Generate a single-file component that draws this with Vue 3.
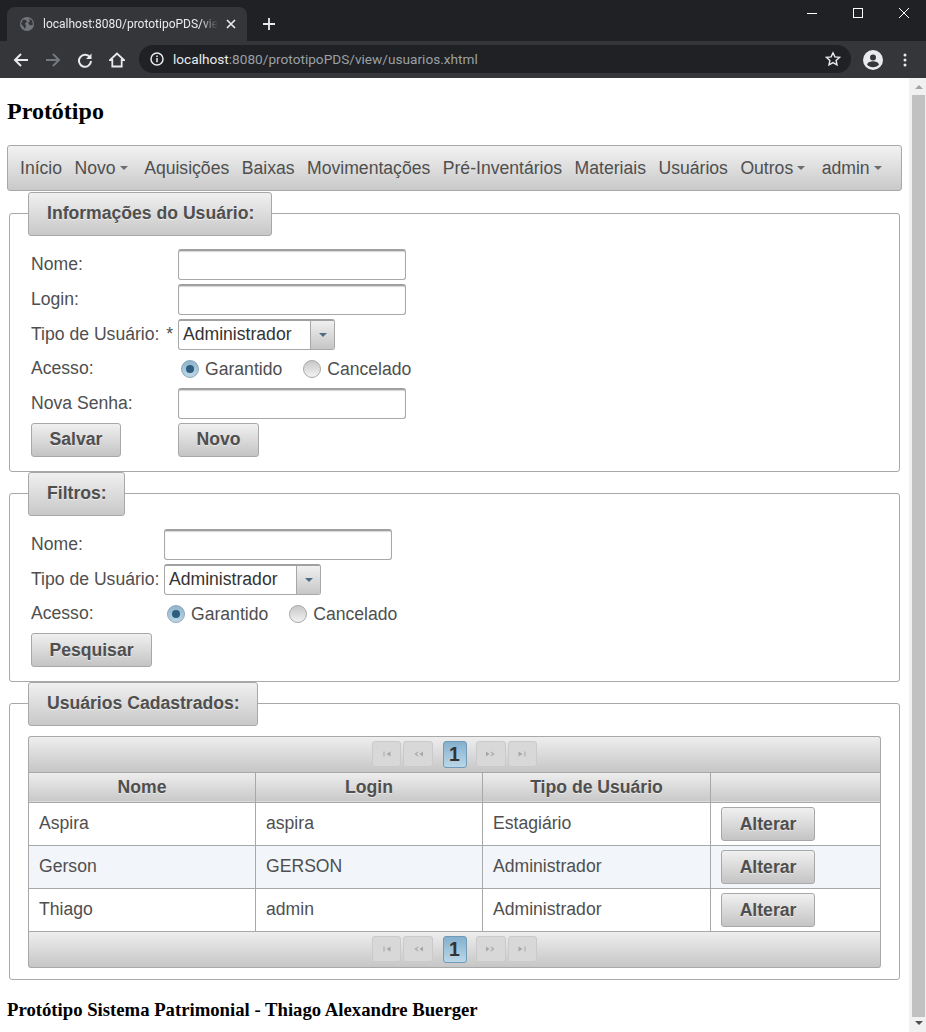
<template>
  <div class="window">
    <!-- barra de abas -->
    <div class="tabstrip">
      <div class="tab">
        <svg class="globe" width="14" height="14" viewBox="0 0 14 14">
          <circle cx="7" cy="7" r="7" fill="#73767b" />
          <path d="M3 2.500l3 .5 1 2-2 1.500 1 2.500-1 3-2-3-2-2zM9 1.500l3 2 1 4-2 1-2-1-1-2 2-1z" fill="#35363a" />
        </svg>
        <span class="tab-title">localhost:8080/prototipoPDS/view/usuarios.xhtml</span>
        <svg class="tab-close" width="10" height="10" viewBox="0 0 10 10">
          <path d="M1 1l8 8M9 1l-8 8" stroke="#e8eaed" stroke-width="1.700" fill="none" />
        </svg>
      </div>
      <svg class="new-tab" width="14" height="14" viewBox="0 0 14 14">
        <path d="M7 1v12M1 7h12" stroke="#e8eaed" stroke-width="1.800" fill="none" />
      </svg>
      <div class="win-controls">
        <svg width="10" height="10" viewBox="0 0 10 10"><path d="M0 5.500h10" stroke="#fff" fill="none" /></svg>
        <svg width="10" height="10" viewBox="0 0 10 10"><rect x=".5" y=".5" width="9" height="9" stroke="#fff" fill="none" /></svg>
        <svg width="10" height="10" viewBox="0 0 10 10"><path d="M0 0l10 10M10 0L0 10" stroke="#fff" fill="none" /></svg>
      </div>
    </div>

    <!-- barra de endereco -->
    <div class="toolbar">
      <svg class="tool" width="16" height="16" viewBox="0 0 16 16">
        <path d="M15 8H2M8 2L2 8l6 6" stroke="#e8eaed" stroke-width="2" fill="none" />
      </svg>
      <svg class="tool" width="16" height="16" viewBox="0 0 16 16">
        <path d="M1 8h13M8 2l6 6-6 6" stroke="#75787c" stroke-width="2" fill="none" />
      </svg>
      <svg class="tool" width="16" height="16" viewBox="0 0 16 16">
        <path d="M13 5.500A6 6 0 1 0 14 9" stroke="#e8eaed" stroke-width="2" fill="none" />
        <path d="M14.500 1.500v5.500H9z" fill="#e8eaed" />
      </svg>
      <svg class="tool" width="16" height="16" viewBox="0 0 16 16">
        <path d="M8 1.500L1 8h2.300v6.500h9.400V8H15z" stroke="#e8eaed" stroke-width="1.800" fill="none" />
      </svg>
      <div class="omnibox">
        <svg width="14" height="14" viewBox="0 0 14 14">
          <circle cx="7" cy="7" r="6" stroke="#e8eaed" stroke-width="1.500" fill="none" />
          <path d="M7 6v4.200M7 3.500v1.500" stroke="#e8eaed" stroke-width="1.500" fill="none" />
        </svg>
        <span class="url"><b>localhost</b>:8080/prototipoPDS/view/usuarios.xhtml</span>
        <svg class="star" width="16" height="16" viewBox="0 0 16 16">
          <path d="M8 1.800l1.900 4.100 4.500.5-3.300 3 .9 4.400L8 11.600l-4 2.200.9-4.400-3.300-3 4.500-.5z" stroke="#e8eaed" stroke-width="1.400" fill="none" />
        </svg>
      </div>
      <svg class="profile" width="20" height="20" viewBox="0 0 20 20">
        <circle cx="10" cy="10" r="10" fill="#e8eaed" />
        <circle cx="10" cy="7.500" r="3" fill="#35363a" />
        <path d="M4 14.500c1-2.600 3.500-3.200 6-3.200s5 .6 6 3.200c-1.400 1.700-3.600 2.800-6 2.800s-4.600-1.100-6-2.800z" fill="#35363a" />
      </svg>
      <svg class="dots" width="4" height="14" viewBox="0 0 4 14">
        <circle cx="2" cy="2" r="1.500" fill="#e8eaed" />
        <circle cx="2" cy="7" r="1.500" fill="#e8eaed" />
        <circle cx="2" cy="12" r="1.500" fill="#e8eaed" />
      </svg>
    </div>

    <div class="viewport">
      <div class="page">
        <h2 class="title">Protótipo</h2>

        <nav class="menubar">
          <a v-for="item in menu" :key="item.label" class="menu-item">
            {{ item.label }}<i v-if="item.sub" class="caret"></i>
          </a>
        </nav>

        <fieldset class="panel first">
          <legend>Informações do Usuário:</legend>
          <div class="form-grid">
            <label>Nome:</label>
            <input class="field" type="text" />
            <label>Login:</label>
            <input class="field" type="text" />
            <label>Tipo de Usuário: <span class="req">*</span></label>
            <div class="select">
              <span class="select-text">Administrador</span>
              <span class="select-btn"><i class="caret blue"></i></span>
            </div>
            <label class="raised">Acesso:</label>
            <div class="radios">
              <span class="radio on"></span><span class="radio-label first">Garantido</span>
              <span class="radio"></span><span class="radio-label">Cancelado</span>
            </div>
            <label>Nova Senha:</label>
            <input class="field" type="text" />
            <div><button class="btn salvar">Salvar</button></div>
            <div><button class="btn novo">Novo</button></div>
          </div>
        </fieldset>

        <fieldset class="panel">
          <legend>Filtros:</legend>
          <div class="form-grid narrow">
            <label>Nome:</label>
            <input class="field" type="text" />
            <label>Tipo de Usuário:</label>
            <div class="select">
              <span class="select-text">Administrador</span>
              <span class="select-btn"><i class="caret blue"></i></span>
            </div>
            <label class="raised">Acesso:</label>
            <div class="radios">
              <span class="radio on"></span><span class="radio-label first">Garantido</span>
              <span class="radio"></span><span class="radio-label">Cancelado</span>
            </div>
            <div class="full"><button class="btn pesquisar">Pesquisar</button></div>
          </div>
        </fieldset>

        <fieldset class="panel list">
          <legend>Usuários Cadastrados:</legend>
          <div class="datatable">
            <div class="paginator top">
              <span class="pg wide" v-for="(d, i) in pagerLeft" :key="'l' + i">
                <svg width="12" height="8" viewBox="0 0 12 8"><path :d="d" fill="#a6a6a6" /></svg>
              </span>
              <span class="pg current">1</span>
              <span class="pg wide" v-for="(d, i) in pagerRight" :key="'r' + i">
                <svg width="12" height="8" viewBox="0 0 12 8"><path :d="d" fill="#a6a6a6" /></svg>
              </span>
            </div>
            <table>
              <thead>
                <tr>
                  <th class="c1">Nome</th>
                  <th class="c2">Login</th>
                  <th class="c3">Tipo de Usuário</th>
                  <th></th>
                </tr>
              </thead>
              <tbody>
                <tr v-for="(u, i) in usuarios" :key="u.login" :class="{ alt: i % 2 === 1 }">
                  <td>{{ u.nome }}</td>
                  <td>{{ u.login }}</td>
                  <td>{{ u.tipo }}</td>
                  <td><button class="btn alterar">Alterar</button></td>
                </tr>
              </tbody>
            </table>
            <div class="paginator bottom">
              <span class="pg wide" v-for="(d, i) in pagerLeft" :key="'bl' + i">
                <svg width="12" height="8" viewBox="0 0 12 8"><path :d="d" fill="#a6a6a6" /></svg>
              </span>
              <span class="pg current">1</span>
              <span class="pg wide" v-for="(d, i) in pagerRight" :key="'br' + i">
                <svg width="12" height="8" viewBox="0 0 12 8"><path :d="d" fill="#a6a6a6" /></svg>
              </span>
            </div>
          </div>
        </fieldset>

        <h3 class="footer">Protótipo Sistema Patrimonial - Thiago Alexandre Buerger</h3>
      </div>

      <!-- barra de rolagem -->
      <div class="scrollbar">
        <i class="arrow up"></i>
        <div class="thumb"></div>
        <i class="arrow down"></i>
      </div>
    </div>
  </div>
</template>

<script setup>
const menu = [
  { label: 'Início' },
  { label: 'Novo', sub: true },
  { label: 'Aquisições' },
  { label: 'Baixas' },
  { label: 'Movimentações' },
  { label: 'Pré-Inventários' },
  { label: 'Materiais' },
  { label: 'Usuários' },
  { label: 'Outros', sub: true },
  { label: 'admin', sub: true }
]

const usuarios = [
  { nome: 'Aspira', login: 'aspira', tipo: 'Estagiário' },
  { nome: 'Gerson', login: 'GERSON', tipo: 'Administrador' },
  { nome: 'Thiago', login: 'admin', tipo: 'Administrador' }
]

// icones do paginador
const pagerLeft = [
  'M2.500 1.500h1v5h-1zM9.500 1.500v5L5.500 4z',
  'M6 1.500l.6.6L4.500 4l2.100 1.900-.6.6L2.500 4zM11 1.500v5L7.500 4z'
]
const pagerRight = [
  'M1 1.500v5L4.500 4zM6 1.500L9.500 4 6 6.500l-.6-.6L7.500 4 5.400 2.100z',
  'M2.500 1.500v5L6.500 4zM8.500 1.500h1v5h-1z'
]
</script>

<style>
html, body {
  margin: 0;
  overflow: hidden;
}
</style>

<style scoped>
.window {
  width: 926px;
  height: 1032px;
  overflow: hidden;
  display: flex;
  flex-direction: column;
  background: #fff;
  font-family: "Liberation Sans", Arial, sans-serif;
  font-size: 17.6px;
  color: #4f4f4f;
}

/* chrome */
.tabstrip {
  height: 41px;
  flex: none;
  background: #202124;
  display: flex;
  align-items: flex-end;
  padding-left: 7px;
  position: relative;
}
.tab {
  width: 240px;
  height: 34px;
  box-sizing: border-box;
  background: #35363a;
  border-radius: 8px 8px 0 0;
  display: flex;
  align-items: center;
  padding: 0 11px 0 13px;
}
.globe {
  flex: none;
  margin-right: 9px;
}
.tab-title {
  width: 175px;
  overflow: hidden;
  white-space: nowrap;
  font: 12px "Roboto", sans-serif;
  color: #e8eaed;
  -webkit-mask-image: linear-gradient(90deg, #000 90%, transparent);
  mask-image: linear-gradient(90deg, #000 90%, transparent);
}
.tab-close {
  margin-left: 8px;
  flex: none;
}
.new-tab {
  margin: 0 0 10px 15px;
}
.win-controls {
  position: absolute;
  right: 17px;
  top: 8px;
  display: flex;
  gap: 36px;
}
.toolbar {
  height: 37px;
  flex: none;
  background: #35363a;
  display: flex;
  align-items: center;
  padding-left: 13px;
}
.tool {
  margin-right: 16px;
  flex: none;
}
.omnibox {
  width: 712px;
  height: 28px;
  margin: -1px 0 0 -2px;
  box-sizing: border-box;
  background: #202124;
  border-radius: 14px;
  display: flex;
  align-items: center;
  padding: 0 10px 0 11px;
}
.url {
  margin-left: 9px;
  font: 13.65px "Roboto", sans-serif;
  color: #9aa0a6;
  white-space: nowrap;
}
.url b {
  font-weight: 400;
  color: #e8eaed;
}
.star {
  margin-left: auto;
}
.profile {
  margin-left: 12px;
  flex: none;
}
.dots {
  margin-left: 20px;
  flex: none;
}

/* pagina */
.viewport {
  flex: 1;
  display: flex;
  min-height: 0;
}
.page {
  width: 909px;
  flex: none;
  box-sizing: border-box;
  padding: 0 7px;
}
.title {
  margin: 20px 0;
  font: bold 24px/27px "Liberation Serif", serif;
  color: #000;
}
.footer {
  margin: 19px 0;
  font: bold 18.72px/22px "Liberation Serif", serif;
  color: #000;
}
.menubar {
  height: 46px;
  box-sizing: border-box;
  border: 1px solid #a8a8a8;
  border-radius: 3px;
  background: linear-gradient(#f2f2f2, #c9c9c9);
  display: flex;
  align-items: center;
  padding-left: 12px;
  gap: 12.5px;
}
.menu-item {
  white-space: nowrap;
  display: flex;
  align-items: center;
}
.caret {
  display: inline-block;
  width: 0;
  height: 0;
  margin: 0 4px 0 4px;
  border: 4px solid transparent;
  border-top-color: #6d6d6d;
  border-bottom: 0;
}
.caret.blue {
  margin: 0;
  border-top-color: #4d6d86;
}

.panel {
  margin: 0 2px;
  padding: 13px 18px 14px;
  min-width: 0;
  border: 1px solid #a8a8a8;
  border-radius: 3px;
}
.panel.first {
  margin-top: 1px;
}
.panel.list {
  padding: 10px 18px 11px;
}
legend {
  height: 43.9px;
  box-sizing: border-box;
  padding: 0 17px 0 18px;
  border: 1px solid #a8a8a8;
  border-radius: 3px;
  background: linear-gradient(#f0f0f0, #c8c8c8);
  font-weight: bold;
  line-height: 41px;
  text-shadow: 0 1px 0 rgba(255, 255, 255, 0.5);
}

.form-grid {
  display: grid;
  grid-template-columns: 147px 1fr;
  row-gap: 4px;
  align-items: center;
  padding-left: 3px;
}
.form-grid.narrow {
  grid-template-columns: 133px 1fr;
}
.full {
  grid-column: 1 / -1;
}
.raised {
  margin-bottom: 1px;
}
.req {
  margin-left: 2px;
}
.field {
  display: block;
  width: 228px;
  height: 31px;
  box-sizing: border-box;
  border: 1px solid #a8a8a8;
  border-top: 2px solid #a0a0a0;
  border-radius: 3px;
  background: #fff;
  box-shadow: inset 0 1px 1px #d8d8d8;
  outline: none;
}
.select {
  width: 157px;
  height: 31px;
  box-sizing: border-box;
  border: 1px solid #a8a8a8;
  border-top: 2px solid #a0a0a0;
  border-radius: 3px;
  display: flex;
}
.select-text {
  flex: 1;
  padding-left: 4px;
  line-height: 27px;
  color: #333;
}
.select-btn {
  width: 23px;
  border-left: 1px solid #a8a8a8;
  background: linear-gradient(#f0f0f0, #c6c6c6);
  display: flex;
  align-items: center;
  justify-content: center;
}
.radios {
  height: 30px;
  display: flex;
  align-items: center;
  padding: 1px 0 0 3px;
  box-sizing: border-box;
}
.radio {
  width: 18px;
  height: 18px;
  box-sizing: border-box;
  border: 1px solid #a8a8a8;
  border-radius: 50%;
  background: linear-gradient(#c8c8c8, #f2f2f2);
  margin-right: 6px;
  display: flex;
  align-items: center;
  justify-content: center;
}
.radio.on {
  border-color: #8ba7bb;
  background: linear-gradient(#8fb4cc, #bcd8e8);
}
.radio.on::after {
  content: "";
  width: 8px;
  height: 8px;
  border-radius: 50%;
  background: #2e5d7e;
}
.radio-label.first {
  margin-right: 21px;
}
.btn {
  display: block;
  height: 34px;
  box-sizing: border-box;
  padding: 0;
  border: 1px solid #a8a8a8;
  border-radius: 3px;
  background: linear-gradient(#f0f0f0, #c4c4c4);
  font: bold 17.6px "Liberation Sans", Arial, sans-serif;
  color: #4f4f4f;
  text-shadow: 0 1px 0 rgba(255, 255, 255, 0.5);
}
.salvar { width: 90px; }
.novo { width: 81px; }
.pesquisar { width: 121px; padding-top: 2px; }
.alterar { width: 94px; margin-left: 10px; padding-top: 2px; }

.datatable {
  width: 853px;
}
.paginator {
  height: 36px;
  box-sizing: border-box;
  border: 1px solid #a8a8a8;
  background: linear-gradient(#eeeeee, #c6c6c6);
  display: flex;
  align-items: center;
  justify-content: center;
  gap: 2px;
}
.paginator.top {
  border-radius: 3px 3px 0 0;
  border-bottom: 0;
}
.paginator.bottom {
  border-radius: 0 0 3px 3px;
  border-top: 0;
}
.pg {
  box-sizing: border-box;
  height: 26px;
  border: 1px solid #cacaca;
  border-radius: 3px;
  background: #d8d8d8;
  display: flex;
  align-items: center;
  justify-content: center;
}
.pg.wide {
  width: 29.6px;
}
.pg.current {
  width: 24px;
  height: 27px;
  margin: 0 7.5px;
  border-color: #6f9ab8;
  background: linear-gradient(#84b0cd, #bbd7e7);
  font-weight: bold;
  font-size: 19.4px;
  color: #333;
}
table {
  width: 853px;
  border-collapse: collapse;
  table-layout: fixed;
}
th, td {
  border: 1px solid #a8a8a8;
  padding: 0 10px;
  box-sizing: border-box;
}
th {
  height: 30px;
  padding: 0;
  background: linear-gradient(#eeeeee, #c8c8c8);
  text-shadow: 0 1px 0 rgba(255, 255, 255, 0.5);
}
td {
  height: 43px;
}
td:last-child {
  padding: 0;
}
.c1 { width: 227px; }
.c2 { width: 227px; }
.c3 { width: 228px; }
tr.alt td {
  background: #f2f5f9;
}

/* scrollbar */
.scrollbar {
  flex: 1;
  background: #f1f1f1;
  display: flex;
  flex-direction: column;
  align-items: center;
  padding-left: 2px;
}
.thumb {
  width: 13px;
  flex: 1;
  background: #c1c1c1;
}
.arrow {
  width: 0;
  height: 0;
  border: 4px solid transparent;
  flex: none;
}
.arrow.up {
  border-top: 0;
  border-bottom-color: #a3a3a3;
  margin: 7px 0 6px;
}
.arrow.down {
  border-bottom: 0;
  border-top-color: #505050;
  margin: 4px 0 7px;
}
</style>
